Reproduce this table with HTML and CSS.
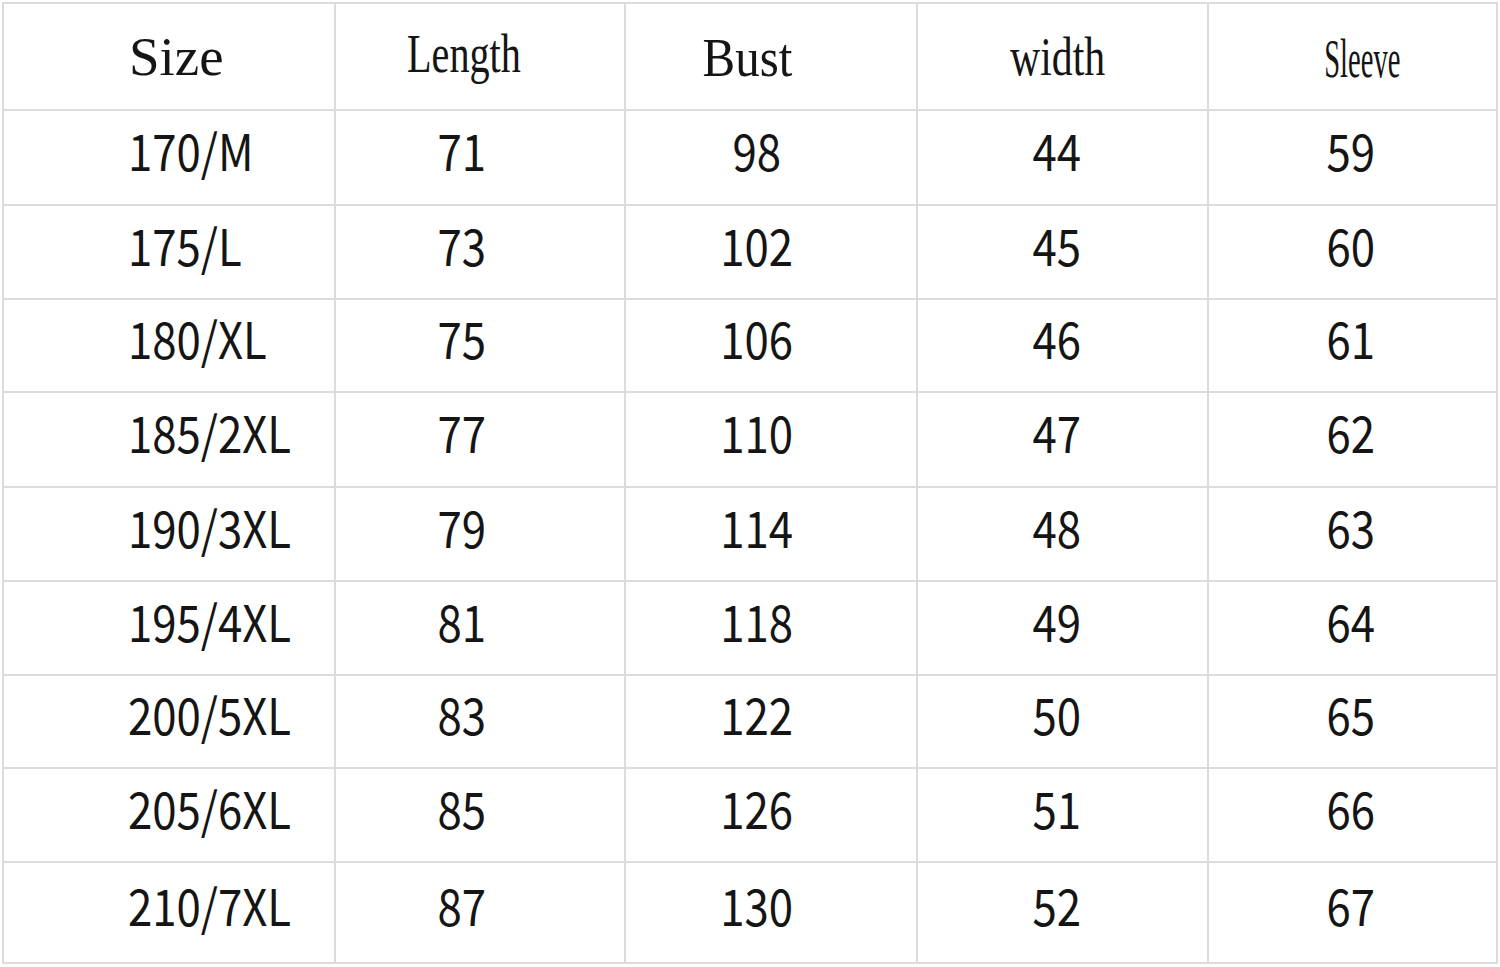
FILE: index.html
```html
<!DOCTYPE html>
<html lang="en">
<head>
<meta charset="utf-8">
<title>Size chart</title>
<link rel="stylesheet" href="styles.css">
</head>
<body>
<div class="chart">
  <div class="cell head c1"><span class="t h-size">Size</span></div>
  <div class="cell head c2"><span class="t h-length">Length</span></div>
  <div class="cell head c3"><span class="t h-bust">Bust</span></div>
  <div class="cell head c4"><span class="t h-width">width</span></div>
  <div class="cell head c5"><span class="t h-sleeve">Sleeve</span></div>

  <div class="cell body c1 r1"><span class="t n">170/M</span></div>
  <div class="cell body c2 r1"><span class="t n">71</span></div>
  <div class="cell body c3 r1"><span class="t n">98</span></div>
  <div class="cell body c4 r1"><span class="t n">44</span></div>
  <div class="cell body c5 r1"><span class="t n">59</span></div>

  <div class="cell body c1"><span class="t n">175/L</span></div>
  <div class="cell body c2"><span class="t n">73</span></div>
  <div class="cell body c3"><span class="t n">102</span></div>
  <div class="cell body c4"><span class="t n">45</span></div>
  <div class="cell body c5"><span class="t n">60</span></div>

  <div class="cell body c1"><span class="t n">180/XL</span></div>
  <div class="cell body c2"><span class="t n">75</span></div>
  <div class="cell body c3"><span class="t n">106</span></div>
  <div class="cell body c4"><span class="t n">46</span></div>
  <div class="cell body c5"><span class="t n">61</span></div>

  <div class="cell body c1"><span class="t n">185/2XL</span></div>
  <div class="cell body c2"><span class="t n">77</span></div>
  <div class="cell body c3"><span class="t n">110</span></div>
  <div class="cell body c4"><span class="t n">47</span></div>
  <div class="cell body c5"><span class="t n">62</span></div>

  <div class="cell body c1"><span class="t n">190/3XL</span></div>
  <div class="cell body c2"><span class="t n">79</span></div>
  <div class="cell body c3"><span class="t n">114</span></div>
  <div class="cell body c4"><span class="t n">48</span></div>
  <div class="cell body c5"><span class="t n">63</span></div>

  <div class="cell body c1"><span class="t n">195/4XL</span></div>
  <div class="cell body c2"><span class="t n">81</span></div>
  <div class="cell body c3"><span class="t n">118</span></div>
  <div class="cell body c4"><span class="t n">49</span></div>
  <div class="cell body c5"><span class="t n">64</span></div>

  <div class="cell body c1"><span class="t n">200/5XL</span></div>
  <div class="cell body c2"><span class="t n">83</span></div>
  <div class="cell body c3"><span class="t n">122</span></div>
  <div class="cell body c4"><span class="t n">50</span></div>
  <div class="cell body c5"><span class="t n">65</span></div>

  <div class="cell body c1"><span class="t n">205/6XL</span></div>
  <div class="cell body c2"><span class="t n">85</span></div>
  <div class="cell body c3"><span class="t n">126</span></div>
  <div class="cell body c4"><span class="t n">51</span></div>
  <div class="cell body c5"><span class="t n">66</span></div>

  <div class="cell body c1"><span class="t n">210/7XL</span></div>
  <div class="cell body c2"><span class="t n">87</span></div>
  <div class="cell body c3"><span class="t n">130</span></div>
  <div class="cell body c4"><span class="t n">52</span></div>
  <div class="cell body c5"><span class="t n">67</span></div>
</div>
</body>
</html>
```

FILE: styles.css
```css
html, body {
  margin: 0;
  padding: 0;
  background: #ffffff;
}

.chart {
  margin: 2px 0 0 2px;
  display: grid;
  grid-template-columns: 332px 290px 292px 291px 289px;
  grid-template-rows: 107px 95px 94px 93px 95px 94px 94px 93px 94px 101px;
  border-top: 2px solid #dcdcdc;
  border-left: 2px solid #dcdcdc;
  width: max-content;
}

.cell {
  border-right: 2px solid #dcdcdc;
  border-bottom: 2px solid #dcdcdc;
  display: flex;
  align-items: center;
  justify-content: center;
  color: #151515;
  overflow: hidden;
}

.t {
  display: inline-block;
  line-height: 1;
  white-space: nowrap;
}

.head .t {
  font-family: "Liberation Serif", "Times New Roman", serif;
  font-size: 55px;
}

.h-size { font-size: 54px; }
.h-length { transform: translateY(-3px) scaleX(0.73); }
.h-bust { transform: translateY(1px) scaleX(0.89); }
.h-width { transform: scaleX(0.76); }
.h-sleeve { transform: translateY(2px) scaleX(0.52); }

.body .t {
  font-family: "Noto Sans CJK JP", "Noto Sans", sans-serif;
  font-size: 50px;
  transform: scaleX(0.875);
}

.body {
  padding-bottom: 17px;
}

.c1 {
  justify-content: flex-start;
  padding-left: 124px;
}
.c1 .t { transform-origin: left center; }

.head.c1 { padding-left: 125px; }

.c2 { padding-right: 36px; }
.c3 { padding-right: 28px; }
.c4 { padding-right: 12px; }
.c5 { padding-right: 4px; }

.head.c2 { padding-right: 32px; }
.head.c3 { padding-right: 48px; }
.head.c4 { padding-right: 10px; }
.head.c5 { padding-right: 0; padding-left: 20px; }
```
